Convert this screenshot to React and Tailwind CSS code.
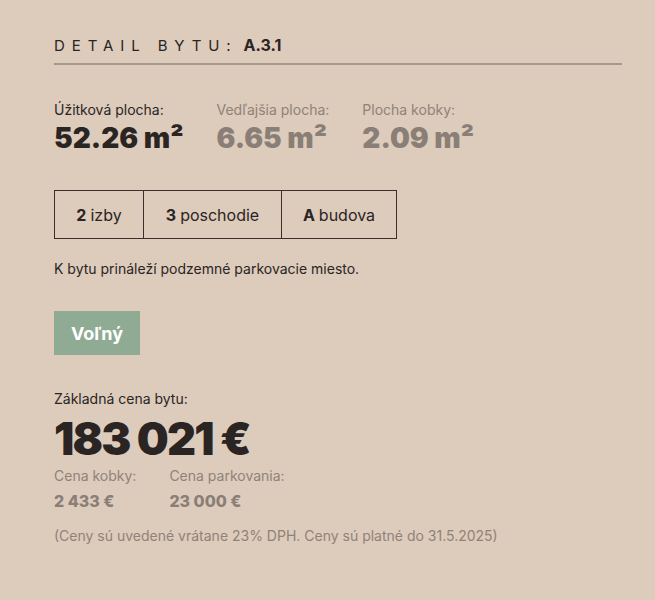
import React from 'react';

const areas = [
  { label: 'Úžitková plocha:', value: '52.26 m²', main: true },
  { label: 'Vedľajšia plocha:', value: '6.65 m²' },
  { label: 'Plocha kobky:', value: '2.09 m²' },
];

const specs = [
  { bold: '2', text: 'izby', w: 'w-[88px]' },
  { bold: '3', text: 'poschodie', w: 'w-[138px]' },
  { bold: 'A', text: 'budova', w: 'w-[115px]' },
];

export default function App() {
  return (
    <div className="min-h-[600px] w-full bg-[#ddcbbc] pl-[54px] pr-[33px] pt-[35px] pb-10 font-['Inter',sans-serif] text-[#2a2523]">
      {/* Nadpis */}
      <div className="flex items-baseline">
        <h2 className="text-[15px] leading-[22px] tracking-[0.46em] uppercase text-[#2a2523]">Detail bytu:</h2>
        <span className="ml-[6px] text-[16px] leading-[20px] font-bold">A.3.1</span>
      </div>
      <div className="mt-[6px] h-[2px] bg-[#a7998b]" />

      {/* Plochy */}
      <div className="mt-[34px] flex gap-[33px]">
        {areas.map((a) => (
          <div key={a.label}>
            <div className={`text-[14px] ${a.main ? 'text-[#2a2523]' : 'text-[#8f8378]'}`}>{a.label}</div>
            <div className={`mt-[2px] text-[28px] font-black leading-[32px] ${a.main ? 'text-[#2a2523]' : 'text-[#8a7f76]'}`}>
              {a.value}
            </div>
          </div>
        ))}
      </div>

      {/* Parametre */}
      <div className="mt-[36px] flex w-fit border border-[#3a302b]">
        {specs.map((s, i) => (
          <div
            key={s.text}
            className={`${s.w} h-[47px] flex items-center justify-center text-[16px] ${i > 0 ? 'border-l border-[#3a302b]' : ''}`}
          >
            <span className="font-bold">{s.bold}</span>
            <span className="ml-[4px]">{s.text}</span>
          </div>
        ))}
      </div>

      <p className="mt-[19px] text-[14px]">K bytu prináleží podzemné parkovacie miesto.</p>

      <div className="mt-[32px] flex h-[44px] w-[86px] items-center justify-center bg-[#8fab93] text-[18px] font-bold text-white">
        Voľný
      </div>

      {/* Cena */}
      <div className="mt-[33px] text-[14px]">Základná cena bytu:</div>
      <div className="mt-[4px] text-[45px] font-black leading-[51px] tracking-[-0.04em]">183 021 €</div>

      <div className="mt-[1px] flex gap-[33px]">
        <div>
          <div className="text-[14px] text-[#8f8378]">Cena kobky:</div>
          <div className="mt-[3px] text-[16px] font-extrabold text-[#8a7f76]">2 433 €</div>
        </div>
        <div>
          <div className="text-[14px] text-[#8f8378]">Cena parkovania:</div>
          <div className="mt-[3px] text-[16px] font-extrabold text-[#8a7f76]">23 000 €</div>
        </div>
      </div>

      <p className="mt-[12px] text-[14px] text-[#8f8378]">
        (Ceny sú uvedené vrátane 23% DPH. Ceny sú platné do 31.5.2025)
      </p>
    </div>
  );
}
